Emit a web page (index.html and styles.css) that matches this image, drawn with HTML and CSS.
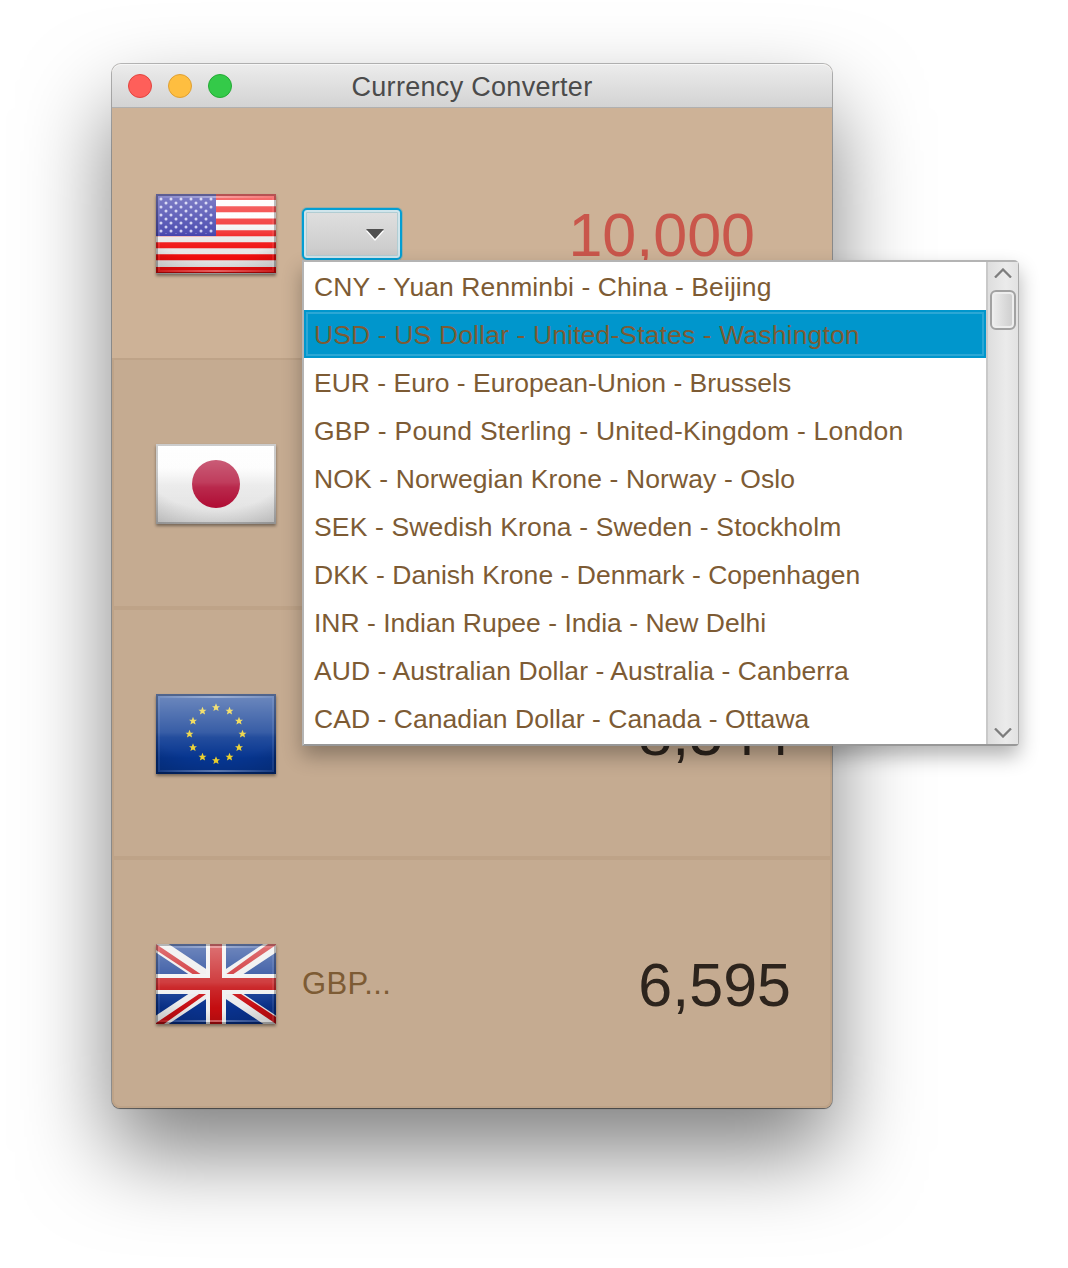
FILE: index.html
```html
<!DOCTYPE html>
<html lang="en">
<head>
<meta charset="utf-8">
<title>Currency Converter</title>
<link rel="stylesheet" href="styles.css">
</head>
<body>
<svg class="defs" width="0" height="0" aria-hidden="true">
  <defs>
    <linearGradient id="gloss" x1="0" y1="0" x2="0" y2="1">
      <stop offset="0" stop-color="#fff" stop-opacity=".42"/>
      <stop offset=".48" stop-color="#fff" stop-opacity=".2"/>
      <stop offset=".54" stop-color="#fff" stop-opacity=".12"/>
      <stop offset=".8" stop-color="#fff" stop-opacity="0"/>
    </linearGradient>
    <linearGradient id="white" x1="0" y1="0" x2="0" y2="1">
      <stop offset="0" stop-color="#fff"/>
      <stop offset=".3" stop-color="#fcfcfc"/>
      <stop offset=".5" stop-color="#e9e9e9"/>
      <stop offset="1" stop-color="#e2e2e2"/>
    </linearGradient>
    <radialGradient id="edge" cx=".5" cy=".2" r=".95">
      <stop offset=".65" stop-color="#000" stop-opacity="0"/>
      <stop offset="1" stop-color="#000" stop-opacity=".2"/>
    </radialGradient>
    <linearGradient id="shine" x1="0" y1="0" x2="1" y2="0">
      <stop offset="0" stop-color="#fff" stop-opacity=".08"/>
      <stop offset=".5" stop-color="#fff" stop-opacity=".35"/>
      <stop offset="1" stop-color="#fff" stop-opacity=".08"/>
    </linearGradient>
    <g id="glaze">
      <rect width="120" height="80" fill="url(#gloss)"/>
      <rect width="120" height="80" fill="url(#edge)"/>
      <rect x="3" y="3" width="114" height="74" fill="none" stroke="url(#shine)" stroke-width="2"/>
      <rect x="1" y="1" width="118" height="78" fill="none" stroke="#000" stroke-opacity=".26" stroke-width="2"/>
    </g>
    <pattern id="stars" x="0" y="1" width="10" height="8" patternUnits="userSpaceOnUse">
      <circle cx="5" cy="4" r="1.5" fill="#c4c4ee"/>
      <circle cx="0" cy="0" r="1.5" fill="#c4c4ee"/><circle cx="10" cy="0" r="1.5" fill="#c4c4ee"/>
      <circle cx="0" cy="8" r="1.5" fill="#c4c4ee"/><circle cx="10" cy="8" r="1.5" fill="#c4c4ee"/>
    </pattern>
    <path id="star" fill="#ecd02c" d="M0-4.200 1.200-1.300 4-1.300 1.800.6 2.600 3.600 0 1.900-2.600 3.600-1.800.6-4-1.300-1.200-1.300Z"/>
  </defs>
</svg>

<main class="window">
  <header class="titlebar">
    <div class="lights"><i class="light red"></i><i class="light amber"></i><i class="light green"></i></div>
    <h1 class="title">Currency Converter</h1>
  </header>

  <section class="row active">
    <svg class="flag" viewBox="0 0 120 80">
      <rect width="120" height="80" fill="url(#white)"/>
      <path stroke="#f00b0b" stroke-width="6" d="M0 3H120M0 15.300H120M0 27.600H120M0 39.300H120M0 51.300H120M0 63.300H120M0 76H120"/>
      <rect width="60" height="42" fill="#24249f"/>
      <rect x="2" y="3" width="56" height="37" fill="url(#stars)"/>
      <use href="#glaze"/>
    </svg>
    <div class="field">
      <div class="combo"><svg class="caret" width="18" height="12" viewBox="0 0 18 12"><path fill="#fff" d="M0 2H18L9 12Z"/><path fill="#505050" d="M0 0H18L9 10Z"/></svg></div>
      <ul class="menu">
        <li class="item i1">CNY - Yuan Renminbi - China - Beijing</li>
        <li class="item i2 selected">USD - US Dollar - United-States - Washington</li>
        <li class="item i3">EUR - Euro - European-Union - Brussels</li>
        <li class="item i4">GBP - Pound Sterling - United-Kingdom - London</li>
        <li class="item i5">NOK - Norwegian Krone - Norway - Oslo</li>
        <li class="item i6">SEK - Swedish Krona - Sweden - Stockholm</li>
        <li class="item i7">DKK - Danish Krone - Denmark - Copenhagen</li>
        <li class="item i8">INR - Indian Rupee - India - New Delhi</li>
        <li class="item i9">AUD - Australian Dollar - Australia - Canberra</li>
        <li class="item i10">CAD - Canadian Dollar - Canada - Ottawa</li>
        <li class="scrollbar">
          <svg width="18" height="10" viewBox="0 0 18 10"><path d="M1 9.500 9 1.500 17 9.500" fill="none" stroke="#7d7d7d" stroke-width="2.300"/></svg>
          <span class="thumb"></span>
          <svg class="down" width="18" height="10" viewBox="0 0 18 10"><path d="M1 .5 9 8.500 17 .5" fill="none" stroke="#7d7d7d" stroke-width="2.300"/></svg>
        </li>
      </ul>
    </div>
    <span class="amount">10,000</span>
  </section>

  <section class="row">
    <svg class="flag" viewBox="0 0 120 80">
      <rect width="120" height="80" fill="url(#white)"/>
      <circle cx="60" cy="40" r="24" fill="#b00c34"/>
      <rect width="120" height="80" fill="url(#gloss)"/>
      <rect width="120" height="80" fill="url(#edge)"/>
      <rect x="1" y="1" width="118" height="78" fill="none" stroke="#000" stroke-opacity=".2" stroke-width="2"/>
    </svg>
  </section>

  <section class="row euro">
    <svg class="flag" viewBox="0 0 120 80">
      <rect width="120" height="80" fill="#063590"/>
      <use href="#star" x="60" y="13.500"/><use href="#star" x="73.500" y="17"/><use href="#star" x="83" y="27"/>
      <use href="#star" x="86.500" y="40"/><use href="#star" x="83" y="53.500"/><use href="#star" x="73.500" y="63"/>
      <use href="#star" x="60" y="66.500"/><use href="#star" x="46.500" y="63"/><use href="#star" x="37" y="53.500"/>
      <use href="#star" x="33.500" y="40"/><use href="#star" x="37" y="27"/><use href="#star" x="46.500" y="17"/>
      <use href="#glaze"/>
    </svg>
    <span class="amount">8,544</span>
  </section>

  <section class="row">
    <svg class="flag" viewBox="0 0 120 80">
      <rect width="120" height="80" fill="#09328e"/>
      <path stroke="#ececec" stroke-width="14" d="M0 0 120 80M120 0 0 80"/>
      <path fill="#c80d12" d="M0 0V6L38 31H46ZM120 0H112L69 31H76L120 1ZM0 80H8L50 50H43L0 79ZM120 80V73L85 50H76Z"/>
      <path stroke="#f0f0f0" stroke-width="20" d="M60 0V80M0 40H120"/>
      <path stroke="#c40d10" stroke-width="12" d="M60 0V80M0 40H120"/>
      <use href="#glaze"/>
    </svg>
    <span class="code">GBP...</span>
    <span class="amount">6,595</span>
  </section>
</main>
</body>
</html>
```
FILE: styles.css
```css
* { box-sizing: border-box; }
body {
  margin: 0;
  width: 1068px;
  height: 1268px;
  padding: 64px 0 0 112px;
  overflow: hidden;
  background: #fff;
  font-family: "Liberation Sans", Arial, sans-serif;
}
.defs { position: absolute; }
.window {
  width: 720px;
  height: 1044px;
  border-radius: 9px 9px 8px 8px;
  background: #c5ab91;
  box-shadow: 0 0 0 1px rgba(0,0,0,.26), 0 1px 1px rgba(0,0,0,.35), 0 44px 88px rgba(0,0,0,.5);
}
.titlebar {
  display: grid;
  grid-template-columns: 140px 1fr 140px;
  align-items: center;
  height: 44px;
  border-radius: 9px 9px 0 0;
  border-bottom: 1px solid #b0b0b0;
  background: linear-gradient(#ececec, #d3d3d3);
  box-shadow: inset 0 1px #f6f6f6;
}
.lights { display: flex; gap: 16px; padding-left: 16px; }
.light { width: 24px; height: 24px; border-radius: 50%; border: 1px solid; }
.red { background: #fe5f5a; border-color: #e2443f; }
.amber { background: #febe40; border-color: #dfa033; }
.green { background: #34ca49; border-color: #24aa35; }
.title {
  margin: 3px 0 0;
  font-size: 27px;
  font-weight: 400;
  letter-spacing: .3px;
  text-align: center;
  color: #4b4b4b;
  white-space: nowrap;
}
.row {
  display: flex;
  align-items: center;
  height: 250px;
  padding: 2px 39px 0 42px;
  border: 2px solid #bea388;
  color: #2d241d;
}
.row:last-child { border-radius: 0 0 8px 8px; }
.active { background: #cdb297; border-color: #cdb297; padding-right: 75px; }
.flag {
  flex: none;
  width: 120px;
  height: 80px;
  margin-right: 26px;
  filter: drop-shadow(0 2px 1.500px rgba(0,0,0,.4));
}
.field { position: relative; width: 100px; height: 52px; }
.combo {
  display: flex;
  align-items: center;
  justify-content: flex-end;
  height: 52px;
  padding: 1px 16px 0 0;
  border: 2px solid #039ed3;
  border-radius: 5px;
  background: linear-gradient(#e0e0e0, #c9c9c9);
  box-shadow: 0 0 0 1px rgba(3,158,211,.25), inset 0 0 0 2px #d0e5ec, inset 0 0 0 3px #b1cdd3;
}
.amount { margin: 1px 0 0 auto; font-size: 61px; line-height: 70px; }
.active .amount { color: #c9564b; }
.euro .amount { margin-top: -1px; }
.code { font-size: 31px; letter-spacing: .3px; color: #7d5b34; }
.menu {
  position: absolute;
  z-index: 2;
  top: 52px;
  left: 0;
  width: 717px;
  height: 486px;
  margin: 0;
  padding: 0 32px 0 0;
  list-style: none;
  border: 2px solid #b4b4b4;
  border-right: 1px solid #aaa;
  border-bottom-color: #989898;
  border-radius: 0 5px 4px 0;
  background: #fff;
  box-shadow: 0 10px 20px rgba(0,0,0,.3);
}
.item {
  height: 48px;
  padding-left: 10px;
  font-size: 26.5px;
  line-height: 50px;
  white-space: nowrap;
  color: #7d5b34;
}
.i1 { letter-spacing: .09px; }
.i2 { letter-spacing: .14px; }
.i4 { letter-spacing: .24px; }
.i5 { letter-spacing: .11px; }
.i6 { letter-spacing: .15px; }
.i7 { letter-spacing: .03px; }
.i9 { letter-spacing: .07px; }
.i10 { letter-spacing: .05px; }
.selected { background: #0096cc; box-shadow: inset 0 0 0 2px #0096cc, inset 0 0 0 4px #2ba7d5; }
.scrollbar {
  position: absolute;
  top: 0;
  right: 0;
  bottom: 0;
  width: 32px;
  display: flex;
  flex-direction: column;
  align-items: center;
  padding: 6px 0;
  border-left: 2px solid #c9c9c9;
  background: linear-gradient(90deg, #dedede, #ebebeb 60%, #e2e2e2);
}
.thumb {
  width: 26px;
  height: 40px;
  margin-top: 12px;
  border: 2px solid #a2a2a2;
  border-radius: 6px;
  background: linear-gradient(90deg, #eee, #ccc);
  box-shadow: inset 0 0 0 2px #eee;
}
.down { margin-top: auto; }
```
